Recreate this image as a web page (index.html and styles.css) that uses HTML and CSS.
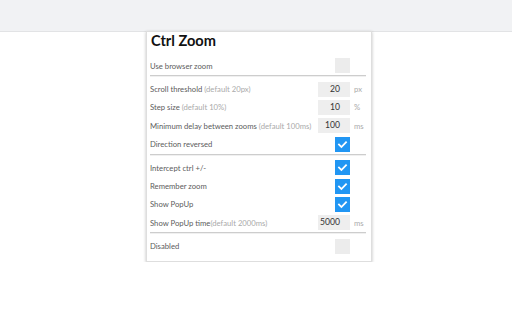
FILE: index.html
```html
<!DOCTYPE html>
<html>
<head>
<meta charset="utf-8">
<link rel="stylesheet" href="styles.css">
</head>
<body>
<div class="topbar"></div>
<div class="panel">
  <h1 class="title">Ctrl Zoom</h1>
  <div class="row first">
    <span class="label">Use browser zoom</span>
    <span class="ctrl"><span class="box"></span></span>
    <span class="unit"></span>
  </div>
  <div class="sep"></div>
  <div class="row">
    <span class="label">Scroll threshold <span class="hint">(default 20px)</span></span>
    <span class="ctrl"><span class="num">20</span></span>
    <span class="unit">px</span>
  </div>
  <div class="row">
    <span class="label">Step size <span class="hint">(default 10%)</span></span>
    <span class="ctrl"><span class="num">10</span></span>
    <span class="unit">%</span>
  </div>
  <div class="row">
    <span class="label">Minimum delay between zooms <span class="hint">(default 100ms)</span></span>
    <span class="ctrl"><span class="num">100</span></span>
    <span class="unit">ms</span>
  </div>
  <div class="row">
    <span class="label">Direction reversed</span>
    <span class="ctrl"><span class="box on"><svg viewBox="0 0 15 15" width="15" height="15"><path d="M4 7.6 L6.4 10 L11 5.2" fill="none" stroke="#fff" stroke-width="1.8" stroke-linecap="square"/></svg></span></span>
    <span class="unit"></span>
  </div>
  <div class="sep"></div>
  <div class="row">
    <span class="label">Intercept ctrl +/-</span>
    <span class="ctrl"><span class="box on"><svg viewBox="0 0 15 15" width="15" height="15"><path d="M4 7.6 L6.4 10 L11 5.2" fill="none" stroke="#fff" stroke-width="1.8" stroke-linecap="square"/></svg></span></span>
    <span class="unit"></span>
  </div>
  <div class="row">
    <span class="label">Remember zoom</span>
    <span class="ctrl"><span class="box on"><svg viewBox="0 0 15 15" width="15" height="15"><path d="M4 7.6 L6.4 10 L11 5.2" fill="none" stroke="#fff" stroke-width="1.8" stroke-linecap="square"/></svg></span></span>
    <span class="unit"></span>
  </div>
  <div class="row">
    <span class="label">Show PopUp</span>
    <span class="ctrl"><span class="box on"><svg viewBox="0 0 15 15" width="15" height="15"><path d="M4 7.6 L6.4 10 L11 5.2" fill="none" stroke="#fff" stroke-width="1.8" stroke-linecap="square"/></svg></span></span>
    <span class="unit"></span>
  </div>
  <div class="row">
    <span class="label">Show PopUp time<span class="hint">(default 2000ms)</span></span>
    <span class="ctrl"><span class="num">5000</span></span>
    <span class="unit">ms</span>
  </div>
  <div class="sep"></div>
  <div class="row">
    <span class="label">Disabled</span>
    <span class="ctrl"><span class="box"></span></span>
    <span class="unit"></span>
  </div>
</div>
</body>
</html>
```
FILE: styles.css
```css
html, body {
  margin: 0;
  padding: 0;
  background: #fff;
}
body {
  font-family: Lato, "Open Sans", sans-serif;
}
.topbar {
  height: 31px;
  background: #f1f2f4;
  border-bottom: 1px solid #e2e3e5;
}
.panel {
  position: relative;
  width: 216px;
  margin: -1px 0 0 146px;
  padding: 0 5px 7px 3px;
  background: #fff;
  border: 1px solid #dedede;
  box-shadow: 0 1px 3px rgba(0, 0, 0, 0.25);
}
.title {
  margin: 0;
  padding-left: 1px;
  font-size: 14.6px;
  line-height: 18px;
  font-weight: 700;
  color: #111;
}
.row {
  display: flex;
  align-items: center;
  height: 15px;
  margin-top: 3.4px;
  font-size: 7.7px;
  color: #5c5c5c;
}
.row.first {
  margin-top: 8px;
}
.sep + .row {
  margin-top: 4.5px;
}
.label {
  flex: 1;
  white-space: nowrap;
}
.hint {
  color: #aaa;
}
.ctrl {
  width: 33px;
  display: flex;
  justify-content: flex-end;
}
.unit {
  width: 12px;
  padding-left: 4px;
  color: #aaa;
  font-size: 7.7px;
}
.box {
  width: 15px;
  height: 15px;
  background: #ececec;
  display: block;
}
.box.on {
  background: #2196f3;
}
.box svg {
  display: block;
}
.num {
  width: 32px;
  height: 15px;
  box-sizing: border-box;
  padding-right: 10px;
  background: #eeeeee;
  text-align: right;
  font-size: 8.6px;
  line-height: 15px;
  color: #333;
}
.sep {
  height: 0;
  margin-top: 2px;
  border-top: 1px solid #cdcdcd;
  border-bottom: 1px solid #f0f0f0;
}
```
